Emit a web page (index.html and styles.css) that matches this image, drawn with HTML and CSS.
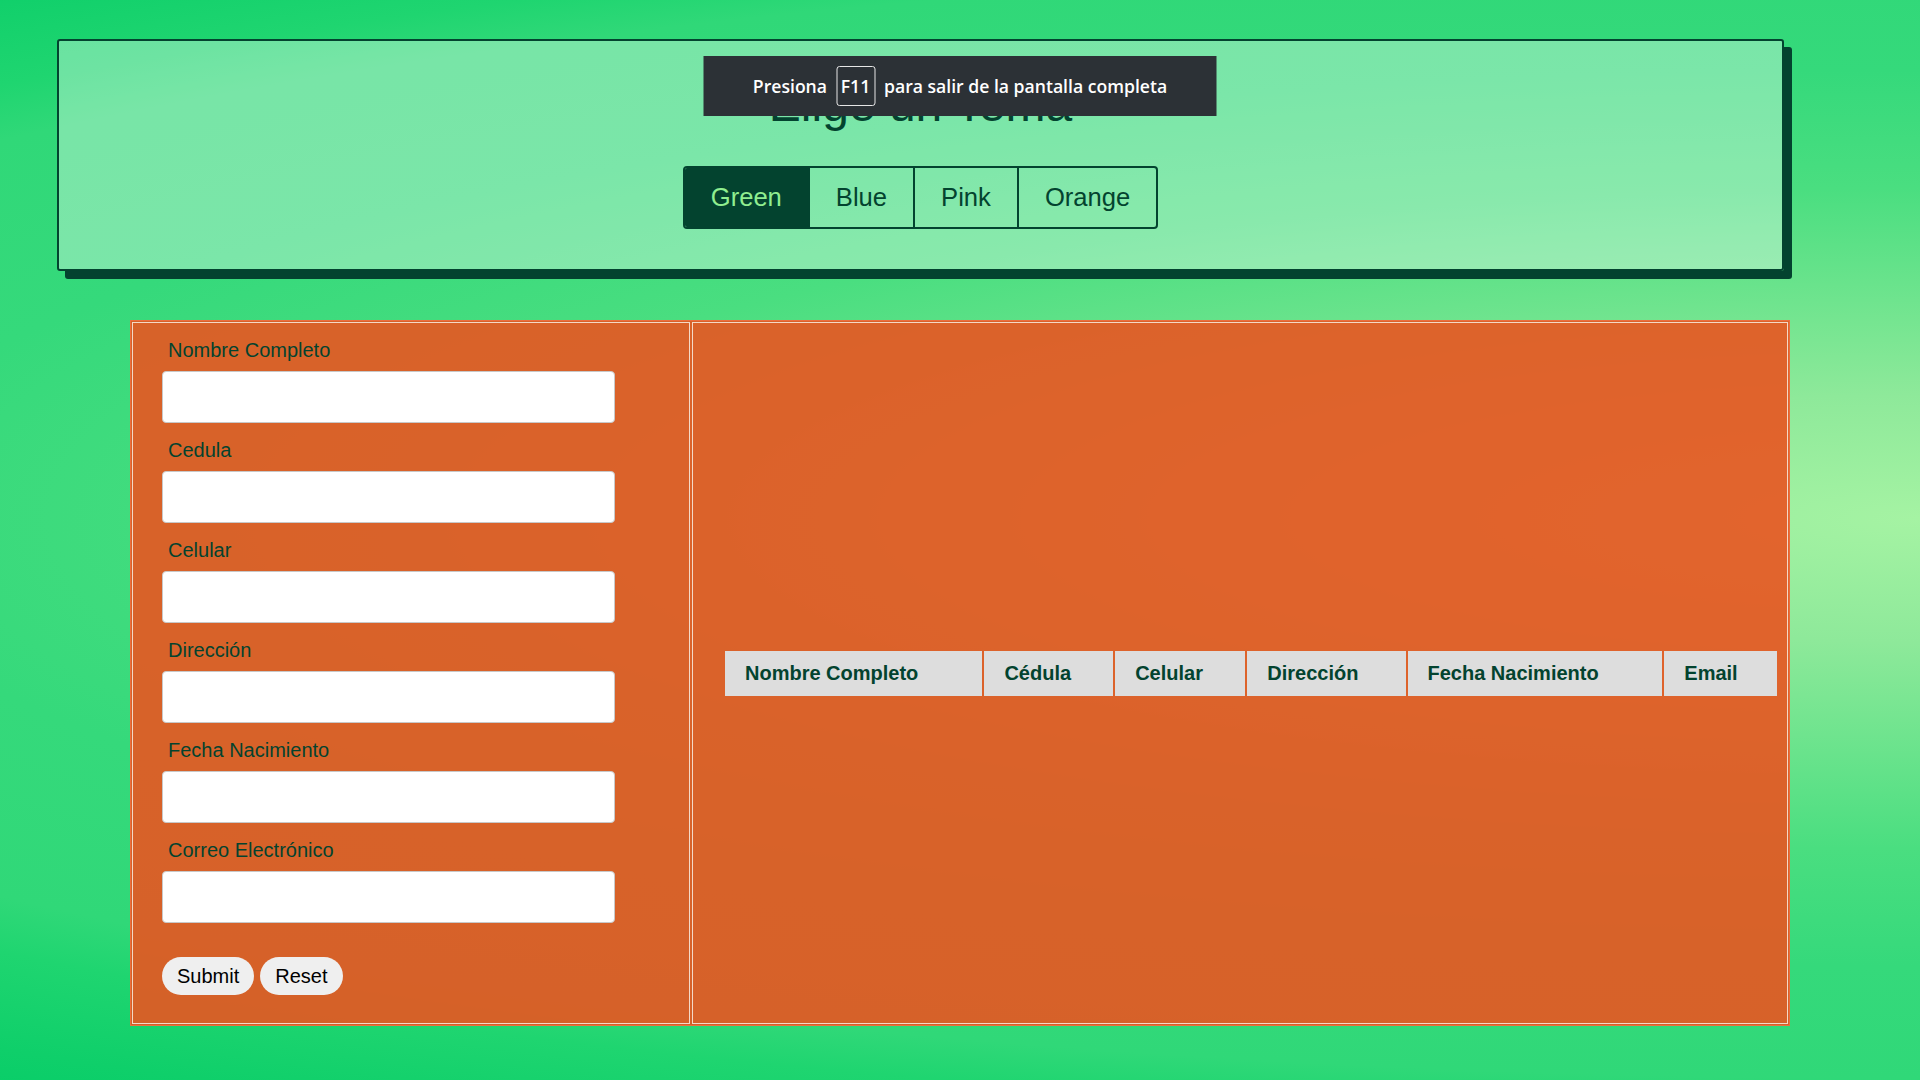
FILE: index.html
```html
<!DOCTYPE html>
<html lang="es">
<head>
<meta charset="utf-8">
<title>Elige un Tema</title>
<link rel="stylesheet" href="styles.css">
</head>
<body>
<div class="page">
  <div class="fs-toast">Presiona <kbd class="fs-key">F11</kbd> para salir de la pantalla completa</div>

  <header class="theme-panel">
    <h1 class="theme-title">Elige un Tema</h1>
    <div class="theme-switch">
      <button class="theme-btn is-active" type="button">Green</button>
      <button class="theme-btn" type="button">Blue</button>
      <button class="theme-btn" type="button">Pink</button>
      <button class="theme-btn" type="button">Orange</button>
    </div>
  </header>

  <main class="workspace">
    <section class="form-cell">
      <form class="person-form">
        <div class="field"><label class="field-label">Nombre Completo</label><input class="field-input" type="text"></div>
        <div class="field"><label class="field-label">Cedula</label><input class="field-input" type="text"></div>
        <div class="field"><label class="field-label">Celular</label><input class="field-input" type="text"></div>
        <div class="field"><label class="field-label">Dirección</label><input class="field-input" type="text"></div>
        <div class="field"><label class="field-label">Fecha Nacimiento</label><input class="field-input" type="text"></div>
        <div class="field"><label class="field-label">Correo Electrónico</label><input class="field-input" type="text"></div>
        <div class="actions">
          <button class="pill-btn" type="submit">Submit</button>
          <button class="pill-btn" type="reset">Reset</button>
        </div>
      </form>
    </section>
    <section class="table-cell">
      <table class="records">
        <thead>
          <tr>
            <th class="records-th">Nombre Completo</th>
            <th class="records-th">Cédula</th>
            <th class="records-th">Celular</th>
            <th class="records-th">Dirección</th>
            <th class="records-th">Fecha Nacimiento</th>
            <th class="records-th">Email</th>
          </tr>
        </thead>
        <tbody></tbody>
      </table>
    </section>
  </main>
</div>
</body>
</html>
```
FILE: styles.css
```css
html, body {
  margin: 0;
  padding: 0;
}

.page {
  position: relative;
  width: 1920px;
  height: 1080px;
  box-sizing: border-box;
  padding-top: 39px;
  overflow: hidden;
  font-family: "Liberation Sans", Arial, sans-serif;
  background: radial-gradient(ellipse 2600px 560px at 100% 48%,
      #a5f3a3 0%,
      #8ee99a 22%,
      #4ade80 59%,
      #35d97b 80%,
      #30d878 100%,
      #1fd570 107%,
      #0fcf6a 120%,
      #04cc67 130%);
}

/* fullscreen notice overlay */
.fs-toast {
  position: absolute;
  top: 56px;
  left: 50%;
  transform: translateX(-50%);
  width: 513px;
  height: 60px;
  background: #2c3136;
  color: #ffffff;
  font-family: "Open Sans", "Noto Sans", sans-serif;
  font-weight: 600;
  font-size: 17.6px;
  display: flex;
  align-items: center;
  justify-content: center;
  gap: 9px;
  z-index: 5;
}

.fs-key {
  display: flex;
  align-items: center;
  justify-content: center;
  width: 39px;
  height: 40px;
  box-sizing: border-box;
  border: 1px solid #e6e6e6;
  border-radius: 3px;
  font-family: inherit;
  font-size: inherit;
  font-weight: inherit;
}

/* theme header */
.theme-panel {
  margin-left: 57px;
  width: 1727px;
  height: 232px;
  box-sizing: border-box;
  border: 2px solid #03432f;
  border-radius: 3px;
  box-shadow: 8px 8px 0 #03432f;
  background: rgba(255, 255, 255, 0.35);
  display: flex;
  flex-direction: column;
  align-items: center;
  padding-top: 36px;
}

.theme-title {
  margin: 0;
  font-size: 48px;
  line-height: 55px;
  font-weight: normal;
  color: #03432f;
}

.theme-switch {
  margin-top: 34px;
  display: flex;
  border: 2px solid #03432f;
  border-radius: 4px;
  overflow: hidden;
}

.theme-btn {
  height: 59px;
  padding: 0 26px;
  margin: 0;
  border: 0;
  border-left: 2px solid #03432f;
  background: transparent;
  color: #03432f;
  font-family: "Liberation Sans", Arial, sans-serif;
  font-size: 25.6px;
}

.theme-btn:first-child {
  border-left: 0;
}

.theme-btn.is-active {
  background: #03432f;
  color: #90ee90;
}

/* main area */
.workspace {
  margin: 49px auto 0;
  width: 1660px;
  box-sizing: border-box;
  display: flex;
  gap: 2px;
  padding: 1px;
  border: 1px solid #ec6e3e;
  background: rgba(233, 84, 32, 0.9);
}

.form-cell {
  width: 558px;
  box-sizing: border-box;
  border: 1px solid #f4d9c7;
  padding: 16px 0 28px 29px;
}

.person-form {
  display: flex;
  flex-direction: column;
  gap: 16px;
}

.field {
  display: flex;
  flex-direction: column;
  gap: 9px;
}

.field-label {
  display: block;
  font-size: 20px;
  line-height: 23px;
  padding-left: 6px;
  color: #03432f;
}

.field-input {
  display: block;
  width: 453px;
  height: 52px;
  box-sizing: border-box;
  margin: 0;
  border: 1px solid #c8c8c8;
  border-radius: 4px;
  background: #ffffff;
  font-family: "Liberation Sans", Arial, sans-serif;
  font-size: 18px;
}

.actions {
  margin-top: 18px;
  display: flex;
  gap: 6px;
}

.pill-btn {
  height: 38px;
  padding: 0 15px;
  border: 0;
  border-radius: 19px;
  background: #efefef;
  color: #000000;
  font-family: "Liberation Sans", Arial, sans-serif;
  font-size: 20px;
}

.table-cell {
  flex: 1;
  border: 1px solid #f4d9c7;
  display: flex;
  align-items: center;
  padding-left: 30px;
}

.records {
  width: 1056px;
  border-spacing: 2px;
}

.records-th {
  height: 45px;
  padding: 0 20px;
  background: #dddddd;
  text-align: left;
  font-family: "Liberation Sans", Arial, sans-serif;
  font-weight: bold;
  font-size: 20px;
  color: #03432f;
}
```
